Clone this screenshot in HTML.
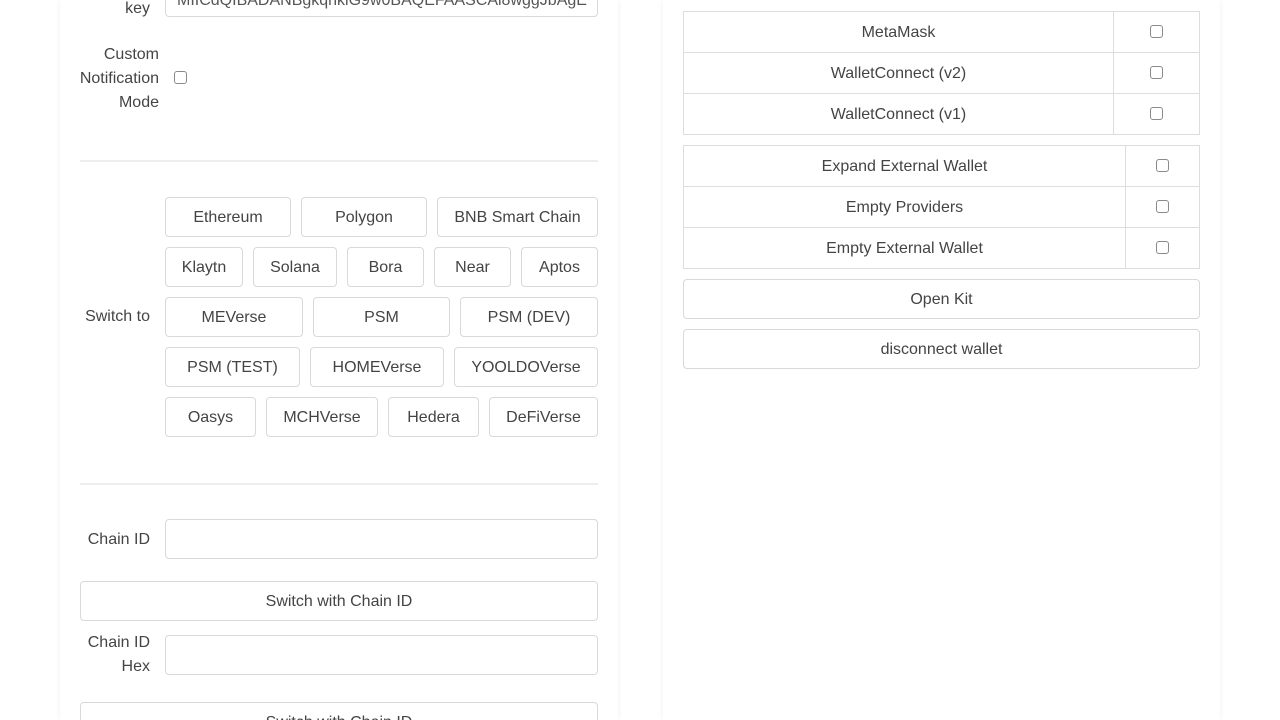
<!DOCTYPE html>
<html><head><meta charset="utf-8"><style>
*{box-sizing:border-box;margin:0;padding:0}
html,body{width:1280px;height:720px;overflow:hidden}
body{background:#fff;font-family:"Liberation Sans",sans-serif;font-size:16px;color:#444;position:relative}
.card{position:absolute;top:0;height:720px;background:#fff;box-shadow:0 0 6px rgba(0,0,0,.06)}
.a{position:absolute}
.b{position:absolute;border:1px solid #d9d9d9;border-radius:4px;background:#fff;display:flex;align-items:center;justify-content:center;height:40px;color:#444;padding-top:2px}
.in{position:absolute;border:1px solid #d9d9d9;border-radius:4px;height:40px;background:#fff}
.lbl{position:absolute;text-align:right;line-height:24px}
.hr{position:absolute;left:80px;width:518px;height:2px;background:#eee}
.cb{position:absolute;width:13px;height:13px;border:1px solid #8a8a8a;border-radius:3px;background:#fff}
table{position:absolute;border-collapse:collapse;left:683px;width:517px}
td{border:1px solid #ddd;height:41px;text-align:center;position:relative;padding-top:2px}
</style></head><body>
<div class="card" style="left:60px;width:558px"></div>
<div class="card" style="left:663px;width:557px"></div>

<div class="lbl" style="left:80px;width:70px;top:-3px">key</div>
<div class="in" style="left:165px;top:-23px;width:433px;overflow:hidden"><div class="a" style="left:11px;top:14px;white-space:nowrap;color:#555">MIICdQIBADANBgkqhkiG9w0BAQEFAASCAl8wggJbAgE</div></div>
<div class="lbl" style="left:70px;width:89px;top:43px">Custom Notification Mode</div>
<div class="cb" style="left:174px;top:71px"></div>
<div class="hr" style="top:160px"></div>

<div class="lbl" style="left:80px;width:70px;top:305px">Switch to</div>
<div class="b" style="left:165px;top:197px;width:126px">Ethereum</div>
<div class="b" style="left:301px;top:197px;width:126px">Polygon</div>
<div class="b" style="left:437px;top:197px;width:161px">BNB Smart Chain</div>
<div class="b" style="left:165px;top:247px;width:78px">Klaytn</div>
<div class="b" style="left:253px;top:247px;width:84px">Solana</div>
<div class="b" style="left:347px;top:247px;width:77px">Bora</div>
<div class="b" style="left:434px;top:247px;width:77px">Near</div>
<div class="b" style="left:521px;top:247px;width:77px">Aptos</div>
<div class="b" style="left:165px;top:297px;width:138px">MEVerse</div>
<div class="b" style="left:313px;top:297px;width:137px">PSM</div>
<div class="b" style="left:460px;top:297px;width:138px">PSM (DEV)</div>
<div class="b" style="left:165px;top:347px;width:135px">PSM (TEST)</div>
<div class="b" style="left:310px;top:347px;width:134px">HOMEVerse</div>
<div class="b" style="left:454px;top:347px;width:144px">YOOLDOVerse</div>
<div class="b" style="left:165px;top:397px;width:91px">Oasys</div>
<div class="b" style="left:266px;top:397px;width:112px">MCHVerse</div>
<div class="b" style="left:388px;top:397px;width:91px">Hedera</div>
<div class="b" style="left:489px;top:397px;width:109px">DeFiVerse</div>
<div class="hr" style="top:483px"></div>

<div class="lbl" style="left:80px;width:70px;top:528px">Chain ID</div>
<div class="in" style="left:165px;top:519px;width:433px"></div>
<div class="b" style="left:80px;top:581px;width:518px">Switch with Chain ID</div>
<div class="lbl" style="left:80px;width:70px;top:631px">Chain ID Hex</div>
<div class="in" style="left:165px;top:635px;width:433px"></div>
<div class="b" style="left:80px;top:702px;width:518px;height:18px;border-bottom:none;border-radius:4px 4px 0 0;align-items:flex-start;padding-top:11px;overflow:hidden">Switch with Chain ID</div>

<table style="top:11px">
<tr><td>MetaMask</td><td style="width:86px"><div class="cb" style="left:36px;top:13px"></div></td></tr>
<tr><td>WalletConnect (v2)</td><td><div class="cb" style="left:36px;top:13px"></div></td></tr>
<tr><td>WalletConnect (v1)</td><td><div class="cb" style="left:36px;top:13px"></div></td></tr>
</table>
<table style="top:145px">
<tr><td>Expand External Wallet</td><td style="width:74px"><div class="cb" style="left:30px;top:13px"></div></td></tr>
<tr><td>Empty Providers</td><td><div class="cb" style="left:30px;top:13px"></div></td></tr>
<tr><td>Empty External Wallet</td><td><div class="cb" style="left:30px;top:13px"></div></td></tr>
</table>
<div class="b" style="left:683px;top:279px;width:517px">Open Kit</div>
<div class="b" style="left:683px;top:329px;width:517px">disconnect wallet</div>
</body></html>
